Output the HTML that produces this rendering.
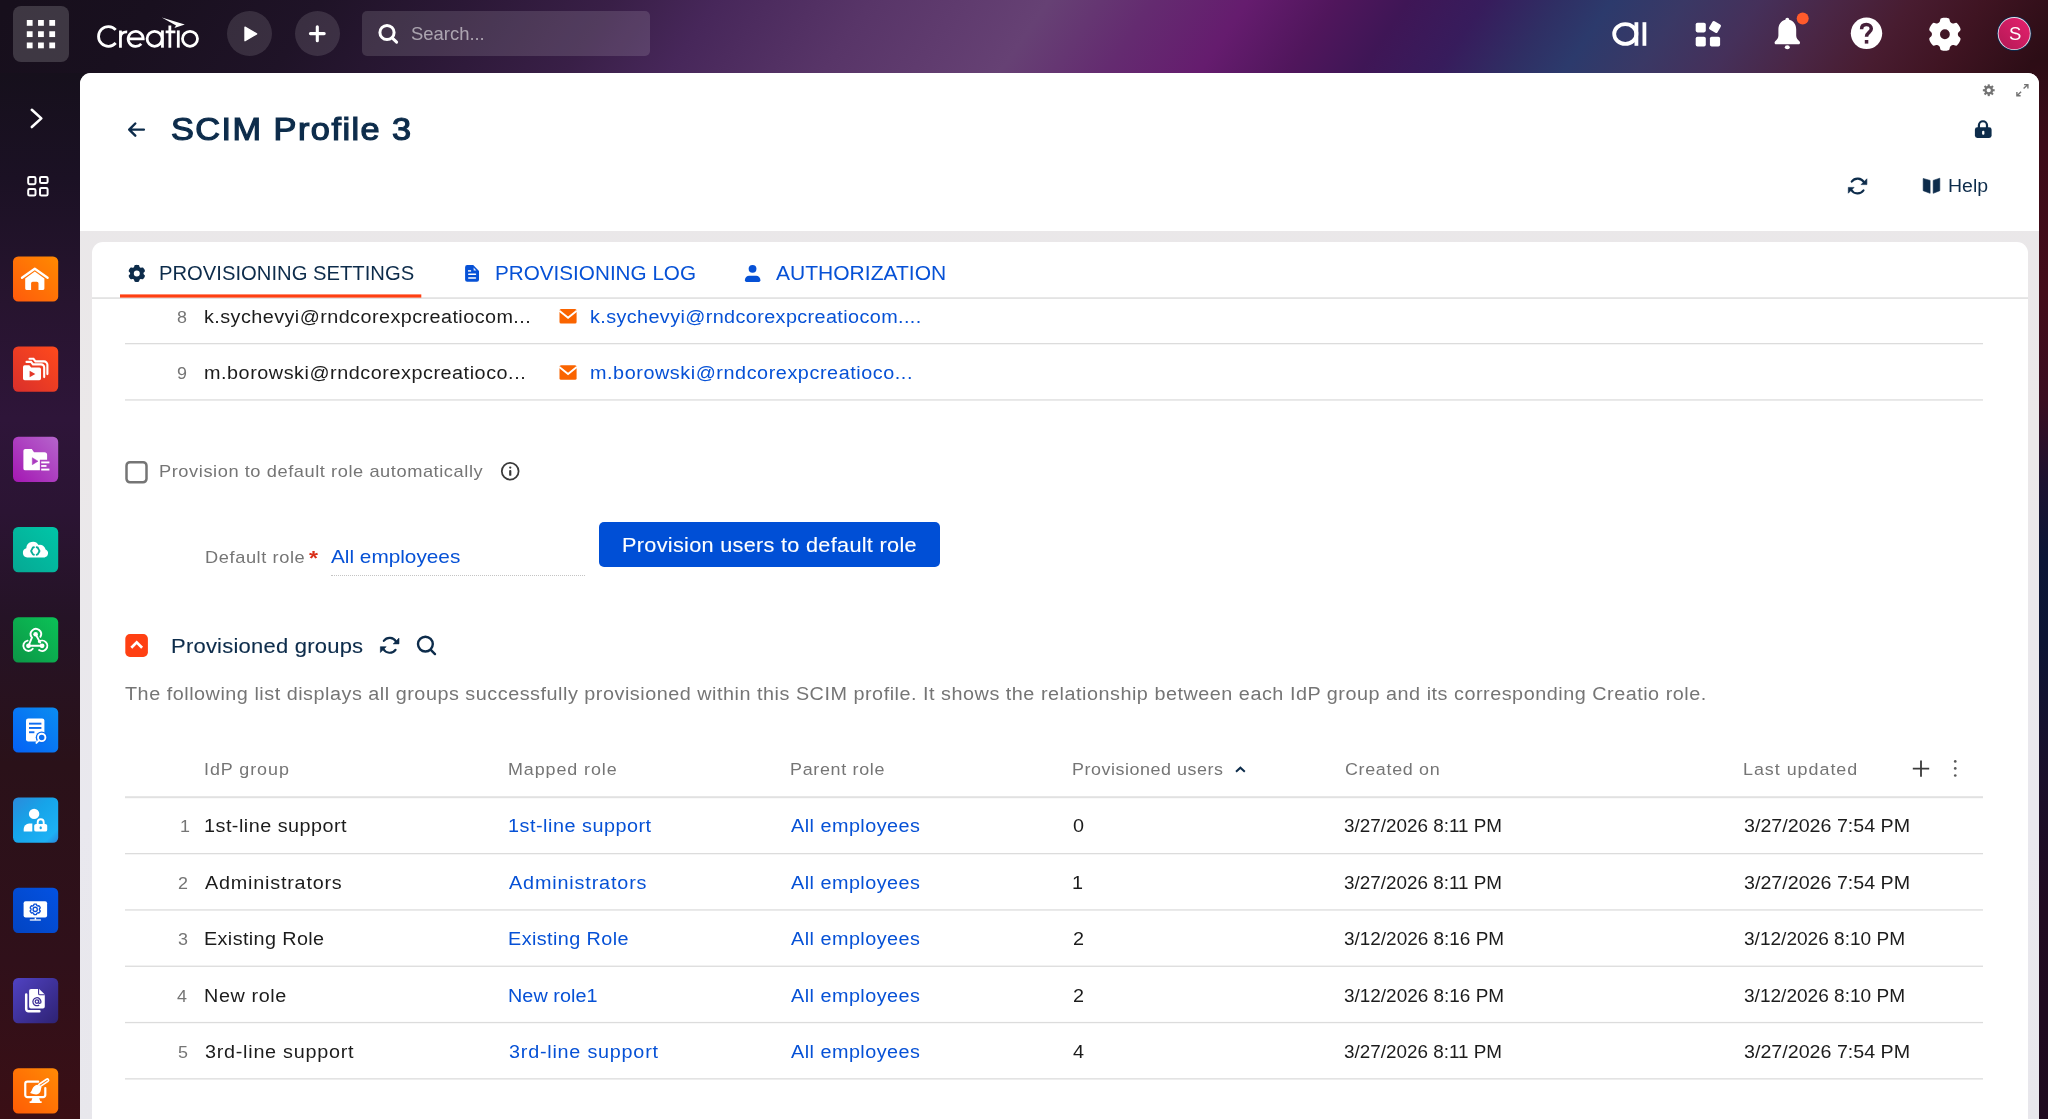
<!DOCTYPE html>
<html lang="en">
<head>
<meta charset="utf-8">
<title>SCIM Profile 3</title>
<style>
*{box-sizing:border-box;margin:0;padding:0}
html,body{width:2048px;height:1119px;overflow:hidden;background:#1f0d1c}
body{position:relative;font-family:"Liberation Sans",sans-serif}
.abs{position:absolute}
.t{position:absolute;white-space:nowrap;line-height:1;transform-origin:0 0;transform:scaleX(1.1);font-family:"Liberation Sans",sans-serif}
svg{position:absolute;overflow:visible}
#topbar{left:0;top:0;width:2048px;height:80px;background:linear-gradient(124deg,#170f1c 0.5%,#19101f 7.4%,#1f1327 15.3%,#2b1836 22.2%,#391f47 29.2%,#47275a 34.1%,#583568 41.5%,#664174 49.9%,#642b70 54.9%,#651c6e 59.4%,#50165c 63.6%,#3f1656 67.0%,#371c5c 70.7%,#2f2f64 74.2%,#2c3a6c 76.7%,#3a3865 80.2%,#45305a 83.8%,#4a2645 87.4%,#481c30 91.0%,#3f1422 94.5%,#2a0c14 99.4%)}
#side{left:0;top:73px;width:92px;height:1046px;background:linear-gradient(180deg,#16101c 0,#1b1124 10%,#27142f 22%,#2e1539 33%,#2b1433 42%,#251326 52%,#2a1119 66%,#30101a 85%,#3a0f15 100%)}
#rstrip{left:2030px;top:60px;width:18px;height:1059px;background:linear-gradient(180deg,#2c0c15 0,#3c0b18 8%,#430c1a 22%,#3a0d20 32%,#1c1230 40%,#0b1536 47%,#0c1434 55%,#1a0f2a 68%,#200a20 80%,#1e0a1e 100%)}
#panel{left:80px;top:73px;width:1959px;height:1060px;border-radius:11px;background:linear-gradient(180deg,#e9e7e9 0,#ebe8e9 35%,#e9e8ee 70%,#e8e7ec 100%);overflow:hidden}
#head{left:0;top:0;width:1959px;height:158px;background:#fff}
#card{left:12px;top:169px;width:1936px;height:900px;background:#fff;border-radius:11px 11px 0 0}
.ln{position:absolute;left:125px;width:1858px;height:1px;background:#dedede}
.tile{position:absolute;left:13px;width:45.2px;height:45.2px;border-radius:5px}
.cbtn{position:absolute;border-radius:50%;background:rgba(255,255,255,.12)}
</style>
</head>
<body>
<div id="topbar" class="abs"></div>
<div id="side" class="abs"></div>
<div id="rstrip" class="abs"></div>

<!-- top bar controls -->
<div class="abs" style="left:13px;top:6px;width:56px;height:56px;border-radius:8px;background:rgba(255,255,255,.17)"></div>
<div class="cbtn" style="left:226.75px;top:11.25px;width:45px;height:45px"></div>
<div class="cbtn" style="left:295px;top:11.25px;width:45px;height:45px"></div>
<div class="abs" style="left:362px;top:11.25px;width:288px;height:45px;border-radius:5px;background:rgba(255,255,255,.13)"></div>
<svg class="abs" style="left:0;top:0" width="2048" height="1119" viewBox="0 0 2048 1119" ><rect x="26.80" y="20.00" width="5.8" height="5.8" fill="#fff"/><rect x="38.05" y="20.00" width="5.8" height="5.8" fill="#fff"/><rect x="49.30" y="20.00" width="5.8" height="5.8" fill="#fff"/><rect x="26.80" y="31.25" width="5.8" height="5.8" fill="#fff"/><rect x="38.05" y="31.25" width="5.8" height="5.8" fill="#fff"/><rect x="49.30" y="31.25" width="5.8" height="5.8" fill="#fff"/><rect x="26.80" y="42.50" width="5.8" height="5.8" fill="#fff"/><rect x="38.05" y="42.50" width="5.8" height="5.8" fill="#fff"/><rect x="49.30" y="42.50" width="5.8" height="5.8" fill="#fff"/><path d="M115.72,29.86 A9.85,9.85 0 1,0 115.72,43.04" fill="none" stroke="#fff" stroke-width="2.8"/><path d="M120.45,30.4 V47.7 M120.45,37.5 C120.45,33.5 123.2,31.6 127.2,31.8" fill="none" stroke="#fff" stroke-width="2.8"/><path d="M128.4,38.8 H143.2 A7.5,7.5 0 1,0 141.3,43.9" fill="none" stroke="#fff" stroke-width="2.8"/><circle cx="154.6" cy="38.8" r="7.5" fill="none" stroke="#fff" stroke-width="2.8"/><path d="M162.45,30.4 V47.7" fill="none" stroke="#fff" stroke-width="2.8"/><path d="M169.85,25.6 V47.7 M165.6,31.8 H175.4" fill="none" stroke="#fff" stroke-width="2.8"/><path d="M178.3,30.4 V47.7" fill="none" stroke="#fff" stroke-width="2.8"/><circle cx="190" cy="38.8" r="7.5" fill="none" stroke="#fff" stroke-width="2.8"/><path d="M161.8,17.6 L184.8,24.6 L174.4,27.9 L176,25.6 Z" fill="#fff"/><path d="M245,27.2 L256.6,33.9 L245,40.7 Z" fill="#fff" stroke="#fff" stroke-width="1.4" stroke-linejoin="round"/><path d="M310.4,33.6 H324.2 M317.3,26.8 V40.7" stroke="#fff" stroke-width="3.1" stroke-linecap="round" fill="none"/><circle cx="387" cy="32.5" r="7.1" fill="none" stroke="#fff" stroke-width="3"/><path d="M392.4,38.1 L396.6,42.1" stroke="#fff" stroke-width="3" stroke-linecap="round"/><ellipse cx="1625.3" cy="34" rx="11.1" ry="9.85" fill="none" stroke="#fff" stroke-width="3.8"/><rect x="1634.5" y="22.2" width="3.8" height="23.6" fill="#fff"/><rect x="1642.5" y="22.2" width="3.8" height="23.6" fill="#fff"/><rect x="1695.7" y="22.8" width="10.1" height="9.6" rx="1.8" fill="#fff"/><rect x="1695.7" y="36.7" width="10.1" height="9.8" rx="1.8" fill="#fff"/><rect x="1709.9" y="36.7" width="10.2" height="9.8" rx="1.8" fill="#fff"/><rect x="1710.2" y="22.2" width="9.6" height="9.6" rx="1.6" fill="#fff" transform="rotate(30 1715 27)"/><path d="M1787.3,17.8 C1788.5,17.8 1789.2,18.6 1789.2,19.7 C1793.6,20.8 1796.2,24.6 1796.2,29.5 L1796.2,35.5 C1796.2,38 1797.6,39.6 1799.4,41.2 C1800.4,42.1 1800.3,44.2 1798.5,44.2 L1776.1,44.2 C1774.3,44.2 1774.2,42.1 1775.2,41.2 C1777,39.6 1778.4,38 1778.4,35.5 L1778.4,29.5 C1778.4,24.6 1781,20.8 1785.4,19.7 C1785.4,18.6 1786.1,17.8 1787.3,17.8 Z" fill="#fff"/><ellipse cx="1787.3" cy="47.2" rx="2.5" ry="2.05" fill="#fff"/><circle cx="1802.7" cy="18.5" r="6" fill="#ff5a2b"/><circle cx="1866.5" cy="33.3" r="15.7" fill="#fff"/><path d="M1861.6,29.2 C1861.6,26.2 1863.6,24.6 1866.4,24.6 C1869.3,24.6 1871.3,26.3 1871.3,28.8 C1871.3,32.4 1866.5,32.6 1866.5,36.8" fill="none" stroke="#46203a" stroke-width="3.5"/><rect x="1864.8" y="40" width="3.5" height="3.6" fill="#46203a"/><path d="M1957.9,34.2 1957.9,33.6 1958.1,32.9 1958.7,32.1 1959.9,31.1 1960.5,30.1 1960.5,29.2 1960.3,28.3 1960.0,27.5 1959.6,26.8 1959.2,26.0 1958.7,25.3 1958.2,24.6 1957.7,23.9 1957.1,23.3 1956.3,22.8 1955.1,22.9 1953.7,23.4 1952.7,23.5 1952.0,23.3 1951.4,23.0 1950.8,22.6 1950.3,22.1 1949.9,21.2 1949.6,19.7 1949.1,18.6 1948.3,18.2 1947.5,18.0 1946.6,17.8 1945.8,17.8 1944.9,17.8 1944.0,17.8 1943.2,17.8 1942.3,18.0 1941.5,18.2 1940.7,18.6 1940.2,19.7 1939.9,21.2 1939.5,22.1 1939.0,22.6 1938.4,23.0 1937.8,23.3 1937.1,23.5 1936.1,23.4 1934.7,22.9 1933.5,22.8 1932.7,23.3 1932.1,23.9 1931.6,24.6 1931.1,25.3 1930.6,26.0 1930.2,26.8 1929.8,27.5 1929.5,28.3 1929.3,29.2 1929.3,30.1 1929.9,31.1 1931.1,32.1 1931.7,32.9 1931.9,33.6 1931.9,34.2 1931.9,34.9 1931.7,35.6 1931.1,36.4 1929.9,37.4 1929.3,38.4 1929.3,39.3 1929.5,40.2 1929.8,41.0 1930.2,41.7 1930.6,42.5 1931.1,43.2 1931.6,43.9 1932.1,44.6 1932.7,45.2 1933.5,45.7 1934.7,45.6 1936.1,45.1 1937.1,45.0 1937.8,45.2 1938.4,45.5 1939.0,45.9 1939.5,46.4 1939.9,47.3 1940.2,48.8 1940.7,49.9 1941.5,50.3 1942.3,50.5 1943.2,50.7 1944.0,50.7 1944.9,50.8 1945.8,50.7 1946.6,50.7 1947.5,50.5 1948.3,50.3 1949.1,49.9 1949.6,48.8 1949.9,47.3 1950.3,46.4 1950.8,45.9 1951.4,45.5 1952.0,45.2 1952.7,45.0 1953.7,45.1 1955.1,45.6 1956.3,45.7 1957.1,45.2 1957.7,44.6 1958.2,43.9 1958.7,43.2 1959.2,42.5 1959.6,41.7 1960.0,41.0 1960.3,40.2 1960.5,39.3 1960.5,38.4 1959.9,37.4 1958.7,36.4 1958.1,35.6 1957.9,34.9ZM1940.00,34.25a4.90,4.90 0 1,0 9.80,0a4.90,4.90 0 1,0 -9.80,0Z" fill="#fff" fill-rule="evenodd"/><defs><linearGradient id="av" x1="1" y1="0" x2="0" y2="1"><stop offset="0" stop-color="#e6206e"/><stop offset="1" stop-color="#b31955"/></linearGradient></defs><circle cx="2014.2" cy="33.6" r="17.4" fill="#0c294c"/><circle cx="2014.2" cy="33.6" r="16.5" fill="#e9dfe8"/><circle cx="2014.2" cy="33.6" r="15.6" fill="url(#av)"/></svg>

<!-- sidebar -->
<svg class="abs" style="left:0;top:0" width="2048" height="1119" viewBox="0 0 2048 1119" ><defs><linearGradient id="tg0" x1="1" y1="0" x2="0" y2="1"><stop offset="0" stop-color="#ff8a00"/><stop offset="1" stop-color="#ff5a0c"/></linearGradient><linearGradient id="tg1" x1="1" y1="0" x2="0" y2="1"><stop offset="0" stop-color="#ff4a1c"/><stop offset="1" stop-color="#d92f2b"/></linearGradient><linearGradient id="tg2" x1="1" y1="0" x2="0" y2="1"><stop offset="0" stop-color="#b565cc"/><stop offset="1" stop-color="#a417b3"/></linearGradient><linearGradient id="tg3" x1="1" y1="0" x2="0" y2="1"><stop offset="0" stop-color="#00c6a8"/><stop offset="1" stop-color="#06a893"/></linearGradient><linearGradient id="tg4" x1="1" y1="0" x2="0" y2="1"><stop offset="0" stop-color="#0bc257"/><stop offset="1" stop-color="#0c9646"/></linearGradient><linearGradient id="tg5" x1="1" y1="0" x2="0" y2="1"><stop offset="0" stop-color="#0b8df0"/><stop offset="1" stop-color="#0461f6"/></linearGradient><linearGradient id="tg6" x1="0" y1="0" x2="1" y2="1"><stop offset="0" stop-color="#2b8adb"/><stop offset=".42" stop-color="#16a4e9"/><stop offset=".84" stop-color="#1db1f5"/><stop offset="1" stop-color="#2a84db"/></linearGradient><linearGradient id="tg7" x1="1" y1="0" x2="0" y2="1"><stop offset="0" stop-color="#0352e2"/><stop offset="1" stop-color="#0244c2"/></linearGradient><linearGradient id="tg8" x1="0" y1="0" x2="1" y2="1"><stop offset="0" stop-color="#5042c2"/><stop offset="1" stop-color="#2e2273"/></linearGradient><linearGradient id="tg9" x1="1" y1="0" x2="0" y2="1"><stop offset="0" stop-color="#ff8a05"/><stop offset="1" stop-color="#ff5c05"/></linearGradient></defs><rect x="13" y="256.40" width="45.2" height="45.2" rx="5.2" fill="url(#tg0)"/><rect x="13" y="346.60" width="45.2" height="45.2" rx="5.2" fill="url(#tg1)"/><rect x="13" y="436.80" width="45.2" height="45.2" rx="5.2" fill="url(#tg2)"/><rect x="13" y="527.00" width="45.2" height="45.2" rx="5.2" fill="url(#tg3)"/><rect x="13" y="617.20" width="45.2" height="45.2" rx="5.2" fill="url(#tg4)"/><rect x="13" y="707.40" width="45.2" height="45.2" rx="5.2" fill="url(#tg5)"/><rect x="13" y="797.60" width="45.2" height="45.2" rx="5.2" fill="url(#tg6)"/><rect x="13" y="887.80" width="45.2" height="45.2" rx="5.2" fill="url(#tg7)"/><rect x="13" y="978.00" width="45.2" height="45.2" rx="5.2" fill="url(#tg8)"/><rect x="13" y="1068.20" width="45.2" height="45.2" rx="5.2" fill="url(#tg9)"/><g transform="translate(13 256.40)"><path d="M9,21.4 L21.8,12.3 L34.6,21.4" fill="none" stroke="#fff" stroke-width="2.3" stroke-linecap="round" stroke-linejoin="round"/><path d="M12.2,22 L21.8,15.2 L31.4,22 V32.2 A1.3,1.3 0 0,1 30.1,33.5 H25.5 V26.9 A1.6,1.6 0 0,0 23.9,25.3 H19.7 A1.6,1.6 0 0,0 18.1,26.9 V33.5 H13.5 A1.3,1.3 0 0,1 12.2,32.2 Z" fill="#fff"/></g><g transform="translate(13 346.60)"><path d="M16.5,12.2 H20.5 L22.5,14.8 H31 A3.4,3.4 0 0,1 34.4,18.2 V27.5" fill="none" stroke="#fff" stroke-width="2.1" stroke-linecap="round"/><path d="M13.5,15.3 H18 L20,17.8 H28 A3.2,3.2 0 0,1 31.2,21 V30.5" fill="none" stroke="#fff" stroke-width="2.1" stroke-linecap="round"/><path d="M11.7,18.6 H16.3 L18.2,21 H26.3 A1.7,1.7 0 0,1 28,22.7 V32 A1.7,1.7 0 0,1 26.3,33.7 H11.7 A1.7,1.7 0 0,1 10,32 V20.3 A1.7,1.7 0 0,1 11.7,18.6 Z" fill="#fff"/><path d="M16.6,24.2 L22.3,27.4 L16.6,30.6 Z" fill="#e3382a"/></g><g transform="translate(13 436.80)"><path d="M12.3,12.1 H18.8 L21,15.4 H31.5 A2.6,2.6 0 0,1 34.1,18 V22.9 H26.9 V33.5 H12.3 A1.9,1.9 0 0,1 10.4,31.6 V14 A1.9,1.9 0 0,1 12.3,12.1 Z" fill="#fff"/><path d="M19.3,20.9 L25,24.4 L19.3,27.9 Z" fill="#ab3cc0" stroke="#ab3cc0" stroke-width=".5" stroke-linejoin="round"/><rect x="28.2" y="24.7" width="8.2" height="1.85" fill="#fff"/><rect x="28.2" y="28.25" width="5.3" height="1.8" fill="#fff"/><rect x="28.2" y="31.8" width="8.2" height="1.9" fill="#fff"/></g><g transform="translate(13 527.00)"><path d="M14.2,30.4 A4.7,4.7 0 0,1 13.3,21.2 A6.6,6.6 0 0,1 25.6,18 A5.8,5.8 0 0,1 32.6,22.6 A4.1,4.1 0 0,1 31.6,30.4 Z" fill="#fff"/><path d="M20.9,20.2 C18.6,20.2 19.7,23.6 17.5,24 C19.7,24.4 18.6,27.8 20.9,27.8 M23.7,20.2 C26,20.2 24.9,23.6 27.1,24 C24.9,24.4 26,27.8 23.7,27.8" fill="none" stroke="#08ae98" stroke-width="1.9" stroke-linecap="round"/></g><g transform="translate(13 617.20)"><g fill="none" stroke="#fff" stroke-width="1.9" stroke-linecap="round"><path d="M18.64,19.98 A5.2,5.2 0 1,1 27.4,19.6"/><path d="M18.9,20.4 L15.5,28.6"/><path d="M22.6,17 L27.2,25.4"/><path d="M14.6,23.48 A5.2,5.2 0 1,0 19.76,31.58"/><path d="M17.5,28.6 H29.1"/><path d="M25.76,24.62 A5.2,5.2 0 1,1 26.1,32.86"/></g><circle cx="22.6" cy="17" r="2.3" fill="#fff"/><circle cx="15.5" cy="28.6" r="2.4" fill="#fff"/><circle cx="29.1" cy="28.6" r="2.4" fill="#fff"/></g><g transform="translate(13 707.40)"><rect x="13" y="11" width="18.4" height="23" rx="2.2" fill="#fff"/><rect x="16" y="15.3" width="12.4" height="1.9" fill="#0f6cf0"/><rect x="16" y="19.6" width="12.4" height="1.9" fill="#0f6cf0"/><rect x="16" y="23.9" width="5.4" height="1.9" fill="#0f6cf0"/><circle cx="28.7" cy="30" r="6" fill="#0a6cf0"/><circle cx="28.7" cy="30" r="3.7" fill="none" stroke="#fff" stroke-width="1.9"/><path d="M25.9,32.9 L23.4,35.5" stroke="#fff" stroke-width="1.9" stroke-linecap="round"/></g><g transform="translate(13 797.60)"><circle cx="21.1" cy="16.3" r="5.2" fill="#fff"/><path d="M10.7,33.9 V31.4 A5.4,5.4 0 0,1 16.1,26 H19.3 V33.9 Z" fill="#fff"/><rect x="21.2" y="26.3" width="13" height="7.7" rx="1.9" fill="#fff"/><path d="M24.7,26.8 V24.7 A3,3 0 0,1 30.7,24.7 V26.8" fill="none" stroke="#fff" stroke-width="1.9"/><ellipse cx="27.7" cy="30.1" rx="1.15" ry="1.5" fill="#1ca6ec"/></g><g transform="translate(13 887.80)"><rect x="10.6" y="13.4" width="23.5" height="16.4" rx="2" fill="#fff"/><path d="M22.4,29.8 V31.9" stroke="#fff" stroke-width="1.5"/><path d="M17.4,32.1 H27.3" stroke="#fff" stroke-width="1.5" stroke-linecap="round" opacity=".85"/><path d="M26.4,21.6 26.4,21.2 26.6,20.8 27.1,20.3 27.2,19.8 27.0,19.4 26.8,19.0 26.5,18.6 26.2,18.2 25.8,18.0 25.1,18.2 24.6,18.1 24.3,18.0 24.0,17.8 23.7,17.4 23.5,16.7 23.1,16.4 22.7,16.3 22.2,16.3 21.7,16.3 21.3,16.4 20.9,16.7 20.7,17.4 20.4,17.8 20.1,18.0 19.8,18.1 19.3,18.2 18.6,18.0 18.2,18.2 17.9,18.6 17.6,18.9 17.4,19.4 17.2,19.8 17.3,20.3 17.8,20.8 18.0,21.2 18.0,21.6 18.0,22.0 17.8,22.4 17.3,22.9 17.2,23.4 17.4,23.8 17.6,24.2 17.9,24.6 18.2,25.0 18.6,25.2 19.3,25.0 19.8,25.1 20.1,25.2 20.4,25.4 20.7,25.8 20.9,26.5 21.3,26.8 21.7,26.9 22.2,26.9 22.7,26.9 23.1,26.8 23.5,26.5 23.7,25.8 24.0,25.4 24.3,25.2 24.6,25.1 25.1,25.0 25.8,25.2 26.2,25.0 26.5,24.6 26.8,24.2 27.0,23.8 27.2,23.4 27.1,22.9 26.6,22.4 26.4,22.0Z" fill="none" stroke="#0a4fd6" stroke-width="1.35"/><circle cx="22.2" cy="21.6" r="2.1" fill="none" stroke="#0a4fd6" stroke-width="1.35"/></g><g transform="translate(13 978.00)"><path d="M13.2,16.6 V31 A2.2,2.2 0 0,0 15.4,33.2 H26.4" fill="none" stroke="#fff" stroke-width="2.5" stroke-linecap="round"/><path d="M18,10.9 H26.2 L31.8,16.5 V28.6 A1.9,1.9 0 0,1 29.9,30.5 H18 A1.9,1.9 0 0,1 16.1,28.6 V12.8 A1.9,1.9 0 0,1 18,10.9 Z" fill="#fff"/><path d="M25.6,10.9 V15.4 A1.4,1.4 0 0,0 27,16.8 H31.8" fill="none" stroke="#3c2d96" stroke-width="1.1"/><circle cx="23.9" cy="23.6" r="1.7" fill="none" stroke="#3c2d96" stroke-width="1.25"/><path d="M25.6,21.7 V24.3 A1.15,1.15 0 0,0 27.9,23.9 A4,4 0 1,0 26.2,27" fill="none" stroke="#3c2d96" stroke-width="1.25"/></g><g transform="translate(13 1068.20)"><path d="M25.2,13.45 H14.45 A2.2,2.2 0 0,0 12.25,15.65 V26.8 A2.2,2.2 0 0,0 14.45,29 H30.1 A2.2,2.2 0 0,0 32.3,26.8 V19.8" fill="none" stroke="#fff" stroke-width="2.2" stroke-linecap="round"/><path d="M19.4,29.8 H26.1 L27.3,33 H28 A.9,.9 0 0,1 28,34.8 H17.3 A.9,.9 0 0,1 17.3,33 H18.2 Z" fill="#fff"/><rect x="-5.6" y="-1.3" width="11.2" height="2.6" rx="1.3" fill="none" stroke="#fff" stroke-width="1.6" transform="translate(30.7 14.5) rotate(-34)"/><path d="M24.3,16.6 C22,16.8 20.2,18.6 19.2,21 C18.6,22.6 18,23.8 17,24.8 C19.5,25.6 21.5,26.3 23.3,26.2 C26,26 27.6,24.3 27.9,21.6 C28,20.6 28.3,19.6 28.6,18.9 Z" fill="#fff"/></g></svg>

<!-- main panel -->
<div id="panel" class="abs">
  <div id="head" class="abs"></div>
  <div id="card" class="abs"></div>
</div>

<!-- tab underline + borders -->
<svg class="abs" style="left:0;top:0" width="2048" height="1119"><rect x="92" y="297.2" width="1936" height="1.8" fill="#e3e3e3"/><rect x="125" y="343.0" width="1858" height="1.3" fill="#dcdcdc"/><rect x="125" y="399.3" width="1858" height="1.3" fill="#dcdcdc"/><rect x="125" y="796.2" width="1858" height="2" fill="#e1e1e1"/><rect x="125" y="853.0" width="1858" height="1.3" fill="#dcdcdc"/><rect x="125" y="909.3" width="1858" height="1.3" fill="#dcdcdc"/><rect x="125" y="965.6" width="1858" height="1.3" fill="#dcdcdc"/><rect x="125" y="1021.9" width="1858" height="1.3" fill="#dcdcdc"/><rect x="125" y="1078.2" width="1858" height="1.3" fill="#dcdcdc"/><rect x="120" y="294.4" width="301.3" height="3.2" fill="#ff4013"/><rect x="125.3" y="634.1" width="22.6" height="22.8" rx="4.6" fill="#ff4013"/></svg>

<!-- checkbox -->
<svg class="abs" style="left:0;top:0" width="2048" height="1119"><rect x="126.5" y="462.25" width="20" height="20" rx="3.4" fill="none" stroke="#757575" stroke-width="2.5"/></svg>
<!-- required star -->
<!-- dotted underline -->
<div class="abs" style="left:331px;top:575px;width:254px;height:0;border-top:1.3px dotted #c4c4c4"></div>
<!-- blue button -->
<div class="abs" style="left:599px;top:522px;width:340.5px;height:45px;border-radius:5px;background:#004fd6"></div>
<!-- collapse button -->
<svg class="abs" style="left:0;top:0" width="2048" height="1119" viewBox="0 0 2048 1119" ><path d="M31.8,109.8 L41.3,118.4 L31.8,127" fill="none" stroke="#fff" stroke-width="2.6" stroke-linecap="round" stroke-linejoin="round"/><rect x="28.2" y="176.9" width="7.3" height="7.3" rx="1.4" fill="none" stroke="#fff" stroke-width="2"/><rect x="40" y="176.9" width="7.6" height="6.2" rx="1.4" fill="none" stroke="#fff" stroke-width="2"/><rect x="28.2" y="189" width="7.3" height="6.6" rx="1.4" fill="none" stroke="#fff" stroke-width="2"/><rect x="40" y="188" width="7.6" height="7.6" rx="1.4" fill="none" stroke="#fff" stroke-width="2"/><path d="M143.9,129.6 H129.5 M135.3,123.5 L129.2,129.6 L135.3,135.7" fill="none" stroke="#0d2c4b" stroke-width="2.4" stroke-linecap="round" stroke-linejoin="round"/><circle cx="1988.75" cy="90.25" r="3.25" fill="none" stroke="#737373" stroke-width="2.3"/><rect x="1987.7" y="84.35" width="2.1" height="2.4" fill="#737373" transform="rotate(0 1988.75 90.25)"/><rect x="1987.7" y="84.35" width="2.1" height="2.4" fill="#737373" transform="rotate(45 1988.75 90.25)"/><rect x="1987.7" y="84.35" width="2.1" height="2.4" fill="#737373" transform="rotate(90 1988.75 90.25)"/><rect x="1987.7" y="84.35" width="2.1" height="2.4" fill="#737373" transform="rotate(135 1988.75 90.25)"/><rect x="1987.7" y="84.35" width="2.1" height="2.4" fill="#737373" transform="rotate(180 1988.75 90.25)"/><rect x="1987.7" y="84.35" width="2.1" height="2.4" fill="#737373" transform="rotate(225 1988.75 90.25)"/><rect x="1987.7" y="84.35" width="2.1" height="2.4" fill="#737373" transform="rotate(270 1988.75 90.25)"/><rect x="1987.7" y="84.35" width="2.1" height="2.4" fill="#737373" transform="rotate(315 1988.75 90.25)"/><path d="M2023.6,88.6 L2027.7,84.7 M2024.1,84.6 H2027.9 V88.4 M2021.1,91.8 L2017,95.7 M2016.9,92.1 V95.8 H2020.6" fill="none" stroke="#737373" stroke-width="1.4"/><rect x="1974.9" y="127.3" width="16.7" height="10.7" rx="2.4" fill="#0d2c4b"/><path d="M1978.9,128 V125.3 A4.05,4.05 0 0,1 1987,125.3 V128" fill="none" stroke="#0d2c4b" stroke-width="2.2"/><rect x="1982.1" y="130.7" width="2.3" height="4.1" rx="1" fill="#fff"/><path d="M1851.69,181.55 A7.4,7.4 0 0,1 1864.01,182.30" fill="none" stroke="#0d2c4b" stroke-width="2.1" stroke-linecap="round"/><path d="M1863.51,190.45 A7.4,7.4 0 0,1 1851.19,189.70" fill="none" stroke="#0d2c4b" stroke-width="2.1" stroke-linecap="round"/><path d="M1866.90,178.80 L1866.90,184.60 L1861.10,184.60 Z" fill="#0d2c4b" stroke="#0d2c4b" stroke-width=".6" stroke-linejoin="round"/><path d="M1848.30,193.20 L1848.30,187.40 L1854.10,187.40 Z" fill="#0d2c4b" stroke="#0d2c4b" stroke-width=".6" stroke-linejoin="round"/><path d="M1923.2,178.5 L1930.1,180.4 V193.3 L1923.2,190.7 Z M1933.2,180.4 L1939.8,178.2 V190.7 L1933.2,193.3 Z" fill="#0d2c4b" stroke="#0d2c4b" stroke-width=".6" stroke-linejoin="round"/></svg><svg class="abs" style="left:0;top:0" width="2048" height="1119" viewBox="0 0 2048 1119" ><path d="M143.5,273.4 143.5,273.0 143.7,272.5 144.4,271.9 144.9,271.2 144.9,270.7 144.7,270.1 144.5,269.6 144.2,269.1 143.9,268.7 143.6,268.2 143.2,267.8 142.7,267.5 141.9,267.6 141.1,267.8 140.5,267.8 140.2,267.6 139.8,267.3 139.5,266.9 139.3,266.1 139.0,265.3 138.5,265.0 137.9,264.9 137.4,264.9 136.8,264.8 136.2,264.9 135.7,264.9 135.1,265.0 134.6,265.3 134.3,266.1 134.1,266.9 133.8,267.3 133.5,267.6 133.1,267.8 132.5,267.8 131.7,267.6 130.9,267.5 130.4,267.8 130.0,268.2 129.7,268.7 129.4,269.1 129.1,269.6 128.9,270.1 128.7,270.7 128.7,271.2 129.2,271.9 129.9,272.5 130.1,273.0 130.1,273.4 130.1,273.8 129.9,274.3 129.2,274.9 128.7,275.6 128.7,276.1 128.9,276.7 129.1,277.2 129.4,277.7 129.7,278.1 130.0,278.6 130.4,279.0 130.9,279.3 131.7,279.2 132.5,279.0 133.1,279.0 133.5,279.2 133.8,279.5 134.1,279.9 134.3,280.7 134.6,281.5 135.1,281.8 135.7,281.9 136.2,281.9 136.8,281.9 137.4,281.9 137.9,281.9 138.5,281.8 139.0,281.5 139.3,280.7 139.5,279.9 139.8,279.5 140.2,279.2 140.5,279.0 141.1,279.0 141.9,279.2 142.7,279.3 143.2,279.0 143.6,278.6 143.9,278.1 144.2,277.7 144.5,277.2 144.7,276.7 144.9,276.1 144.9,275.6 144.4,274.9 143.7,274.3 143.5,273.8ZM133.80,273.40a3.00,3.00 0 1,0 6.00,0a3.00,3.00 0 1,0 -6.00,0Z" fill="#0d2c4b" fill-rule="evenodd"/><path d="M467.2,265.1 H473.2 L479,270.9 V279.7 A2.1,2.1 0 0,1 476.9,281.8 H467.2 A2.1,2.1 0 0,1 465.1,279.7 V267.2 A2.1,2.1 0 0,1 467.2,265.1 Z" fill="#0651d6"/><path d="M473.6,267.6 V270.4 H476.4 Z" fill="#dfe9fb"/><rect x="468" y="270.2" width="3.1" height="1.4" fill="#fff"/><rect x="468" y="273.5" width="8.2" height="1.5" rx=".7" fill="#fff"/><rect x="468" y="277.2" width="8.2" height="1.5" rx=".7" fill="#fff"/><circle cx="752.55" cy="268.8" r="3.9" fill="#0651d6"/><path d="M749.2,275.7 H756.1 A4.3,4.3 0 0,1 760.4,280 V280.3 A1.6,1.6 0 0,1 758.8,281.9 H746.5 A1.6,1.6 0 0,1 744.9,280.3 V280 A4.3,4.3 0 0,1 749.2,275.7 Z" fill="#0651d6"/><rect x="559.5" y="309.1" width="17.1" height="14.4" rx="1.6" fill="#fa6400"/><path d="M559.3,310.70 L568.05,317.70 L576.8,310.70" fill="none" stroke="#fff" stroke-width="1.9"/><rect x="559.5" y="365.35" width="17.1" height="14.4" rx="1.6" fill="#fa6400"/><path d="M559.3,366.95 L568.05,373.95 L576.8,366.95" fill="none" stroke="#fff" stroke-width="1.9"/><circle cx="510.2" cy="471.3" r="8.4" fill="none" stroke="#3a3a3a" stroke-width="1.75"/><circle cx="510.25" cy="467.6" r="1.15" fill="#3a3a3a"/><rect x="509.15" y="470" width="2.2" height="5.8" rx=".9" fill="#3a3a3a"/><path d="M131.3,647.8 L136.7,642.4 L142.1,647.8" fill="none" stroke="#fff" stroke-width="2.7"/><path d="M383.79,640.85 A7.4,7.4 0 0,1 396.11,641.60" fill="none" stroke="#0d2c4b" stroke-width="2.1" stroke-linecap="round"/><path d="M395.61,649.75 A7.4,7.4 0 0,1 383.29,649.00" fill="none" stroke="#0d2c4b" stroke-width="2.1" stroke-linecap="round"/><path d="M399.00,638.10 L399.00,643.90 L393.20,643.90 Z" fill="#0d2c4b" stroke="#0d2c4b" stroke-width=".6" stroke-linejoin="round"/><path d="M380.40,652.50 L380.40,646.70 L386.20,646.70 Z" fill="#0d2c4b" stroke="#0d2c4b" stroke-width=".6" stroke-linejoin="round"/><circle cx="425.4" cy="644.1" r="7.4" fill="none" stroke="#0d2c4b" stroke-width="2.4"/><path d="M430.8,649.9 L435,654.1" stroke="#0d2c4b" stroke-width="2.4" stroke-linecap="round"/><path d="M1236,771.7 L1240.4,767.7 L1244.8,771.7" fill="none" stroke="#0d2c4b" stroke-width="2"/><path d="M1912.8,768.6 H1929.2 M1921,760.5 V776.8" stroke="#3a3a3a" stroke-width="1.8" fill="none"/><circle cx="1955.25" cy="761.4" r="1.35" fill="#5a5a5a"/><circle cx="1955.25" cy="768.4" r="1.35" fill="#5a5a5a"/><circle cx="1955.25" cy="775.5" r="1.35" fill="#5a5a5a"/></svg>

<div id="txt" style="position:absolute;left:0;top:0;width:2048px;height:1119px;will-change:transform">
<span class="t" style="left:410.50px;top:24.00px;font-size:19px;color:rgba(255,255,255,.55);transform:scaleX(0.9698);">Search...</span>
<span class="t" style="left:170.90px;top:114.00px;font-size:31.2px;color:#0d2c4b;letter-spacing:1.331px;-webkit-text-stroke:1.2px currentColor;">SCIM Profile 3</span>
<span class="t" style="left:1947.92px;top:177.00px;font-size:18px;color:#0d2c4b;transform:scaleX(1.0831);">Help</span>
<span class="t" style="left:2008.90px;top:25.00px;font-size:18.5px;color:#fff;transform:none;">S</span>
<span class="t" style="left:159.27px;top:264.00px;font-size:19.7px;color:#0d2c4b;transform:scaleX(1.0276);">PROVISIONING SETTINGS</span>
<span class="t" style="left:494.65px;top:264.00px;font-size:19.7px;color:#0651d6;transform:scaleX(1.0501);">PROVISIONING LOG</span>
<span class="t" style="left:775.60px;top:264.00px;font-size:19.7px;color:#0651d6;transform:scaleX(1.0683);">AUTHORIZATION</span>
<span class="t" style="left:177.00px;top:309.00px;font-size:16.3px;color:#757575;">8</span>
<span class="t" style="left:203.90px;top:308.00px;font-size:18px;color:#1c1c1c;letter-spacing:0.395px;">k.sychevyi@rndcorexpcreatiocom...</span>
<span class="t" style="left:589.90px;top:308.00px;font-size:18px;color:#0651d6;letter-spacing:0.355px;">k.sychevyi@rndcorexpcreatiocom....</span>
<span class="t" style="left:177.00px;top:365.00px;font-size:16.3px;color:#757575;">9</span>
<span class="t" style="left:203.90px;top:364.00px;font-size:18px;color:#1c1c1c;letter-spacing:0.486px;">m.borowski@rndcorexpcreatioco...</span>
<span class="t" style="left:589.90px;top:364.00px;font-size:18px;color:#0651d6;letter-spacing:0.508px;">m.borowski@rndcorexpcreatioco...</span>
<span class="t" style="left:159.30px;top:464.00px;font-size:16.6px;color:#757575;letter-spacing:0.509px;">Provision to default role automatically</span>
<span class="t" style="left:205.20px;top:550.00px;font-size:16.6px;color:#757575;letter-spacing:0.530px;">Default role</span>
<span class="t" style="left:331.25px;top:547.00px;font-size:19px;color:#0651d6;transform:scaleX(1.0932);">All employees</span>
<span class="t" style="left:622.10px;top:536.00px;font-size:19.7px;color:#fff;letter-spacing:0.281px;-webkit-text-stroke:.12px currentColor;">Provision users to default role</span>
<span class="t" style="left:171.20px;top:636.00px;font-size:20px;color:#0d2c4b;letter-spacing:0.201px;-webkit-text-stroke:.12px currentColor;">Provisioned groups</span>
<span class="t" style="left:125.20px;top:685.00px;font-size:18px;color:#757575;letter-spacing:0.469px;">The following list displays all groups successfully provisioned within this SCIM profile. It shows the relationship between each IdP group and its corresponding Creatio role.</span>
<span class="t" style="left:204.30px;top:761.00px;font-size:16.3px;color:#757575;letter-spacing:0.852px;">IdP group</span>
<span class="t" style="left:508.15px;top:761.00px;font-size:16.3px;color:#757575;letter-spacing:0.827px;">Mapped role</span>
<span class="t" style="left:790.15px;top:761.00px;font-size:16.3px;color:#757575;letter-spacing:0.619px;">Parent role</span>
<span class="t" style="left:1072.15px;top:761.00px;font-size:16.3px;color:#757575;letter-spacing:0.492px;">Provisioned users</span>
<span class="t" style="left:1344.50px;top:761.00px;font-size:16.3px;color:#757575;letter-spacing:0.611px;">Created on</span>
<span class="t" style="left:1742.90px;top:761.00px;font-size:16.3px;color:#757575;letter-spacing:0.884px;">Last updated</span>
<span class="t" style="left:179.90px;top:818.00px;font-size:16.3px;color:#757575;">1</span>
<span class="t" style="left:203.65px;top:817.00px;font-size:18px;color:#1c1c1c;letter-spacing:0.438px;">1st-line support</span>
<span class="t" style="left:508.15px;top:817.00px;font-size:18px;color:#0651d6;letter-spacing:0.468px;">1st-line support</span>
<span class="t" style="left:791.00px;top:817.00px;font-size:18px;color:#0651d6;letter-spacing:0.435px;">All employees</span>
<span class="t" style="left:1073.00px;top:817.00px;font-size:18px;color:#1c1c1c;">0</span>
<span class="t" style="left:1344.25px;top:817.00px;font-size:18px;color:#1c1c1c;transform:scaleX(1.0482);">3/27/2026 8:11 PM</span>
<span class="t" style="left:1743.50px;top:817.00px;font-size:18px;color:#1c1c1c;transform:scaleX(1.0919);">3/27/2026 7:54 PM</span>
<span class="t" style="left:178.00px;top:875.00px;font-size:16.3px;color:#757575;">2</span>
<span class="t" style="left:204.75px;top:874.00px;font-size:18px;color:#1c1c1c;letter-spacing:0.714px;">Administrators</span>
<span class="t" style="left:509.25px;top:874.00px;font-size:18px;color:#0651d6;letter-spacing:0.767px;">Administrators</span>
<span class="t" style="left:791.00px;top:874.00px;font-size:18px;color:#0651d6;letter-spacing:0.435px;">All employees</span>
<span class="t" style="left:1071.90px;top:874.00px;font-size:18px;color:#1c1c1c;">1</span>
<span class="t" style="left:1344.25px;top:874.00px;font-size:18px;color:#1c1c1c;transform:scaleX(1.0482);">3/27/2026 8:11 PM</span>
<span class="t" style="left:1743.50px;top:874.00px;font-size:18px;color:#1c1c1c;transform:scaleX(1.0919);">3/27/2026 7:54 PM</span>
<span class="t" style="left:177.50px;top:931.00px;font-size:16.3px;color:#757575;">3</span>
<span class="t" style="left:203.65px;top:930.00px;font-size:18px;color:#1c1c1c;letter-spacing:0.345px;">Existing Role</span>
<span class="t" style="left:508.15px;top:930.00px;font-size:18px;color:#0651d6;letter-spacing:0.383px;">Existing Role</span>
<span class="t" style="left:791.00px;top:930.00px;font-size:18px;color:#0651d6;letter-spacing:0.435px;">All employees</span>
<span class="t" style="left:1073.00px;top:930.00px;font-size:18px;color:#1c1c1c;">2</span>
<span class="t" style="left:1344.25px;top:930.00px;font-size:18px;color:#1c1c1c;transform:scaleX(1.0522);">3/12/2026 8:16 PM</span>
<span class="t" style="left:1743.50px;top:930.00px;font-size:18px;color:#1c1c1c;transform:scaleX(1.0588);">3/12/2026 8:10 PM</span>
<span class="t" style="left:177.00px;top:988.00px;font-size:16.3px;color:#757575;">4</span>
<span class="t" style="left:203.65px;top:987.00px;font-size:18px;color:#1c1c1c;letter-spacing:0.550px;">New role</span>
<span class="t" style="left:508.15px;top:987.00px;font-size:18px;color:#0651d6;letter-spacing:0.054px;">New role1</span>
<span class="t" style="left:791.00px;top:987.00px;font-size:18px;color:#0651d6;letter-spacing:0.435px;">All employees</span>
<span class="t" style="left:1073.00px;top:987.00px;font-size:18px;color:#1c1c1c;">2</span>
<span class="t" style="left:1344.25px;top:987.00px;font-size:18px;color:#1c1c1c;transform:scaleX(1.0522);">3/12/2026 8:16 PM</span>
<span class="t" style="left:1743.50px;top:987.00px;font-size:18px;color:#1c1c1c;transform:scaleX(1.0588);">3/12/2026 8:10 PM</span>
<span class="t" style="left:177.50px;top:1044.00px;font-size:16.3px;color:#757575;">5</span>
<span class="t" style="left:204.75px;top:1043.00px;font-size:18px;color:#1c1c1c;letter-spacing:0.662px;">3rd-line support</span>
<span class="t" style="left:509.25px;top:1043.00px;font-size:18px;color:#0651d6;letter-spacing:0.692px;">3rd-line support</span>
<span class="t" style="left:791.00px;top:1043.00px;font-size:18px;color:#0651d6;letter-spacing:0.435px;">All employees</span>
<span class="t" style="left:1073.00px;top:1043.00px;font-size:18px;color:#1c1c1c;">4</span>
<span class="t" style="left:1344.25px;top:1043.00px;font-size:18px;color:#1c1c1c;transform:scaleX(1.0482);">3/27/2026 8:11 PM</span>
<span class="t" style="left:1743.50px;top:1043.00px;font-size:18px;color:#1c1c1c;transform:scaleX(1.0919);">3/27/2026 7:54 PM</span>
<span class="t" style="left:309px;top:547px;font-size:21px;color:#d9301a;font-weight:700">*</span>
</div>
</body>
</html>
